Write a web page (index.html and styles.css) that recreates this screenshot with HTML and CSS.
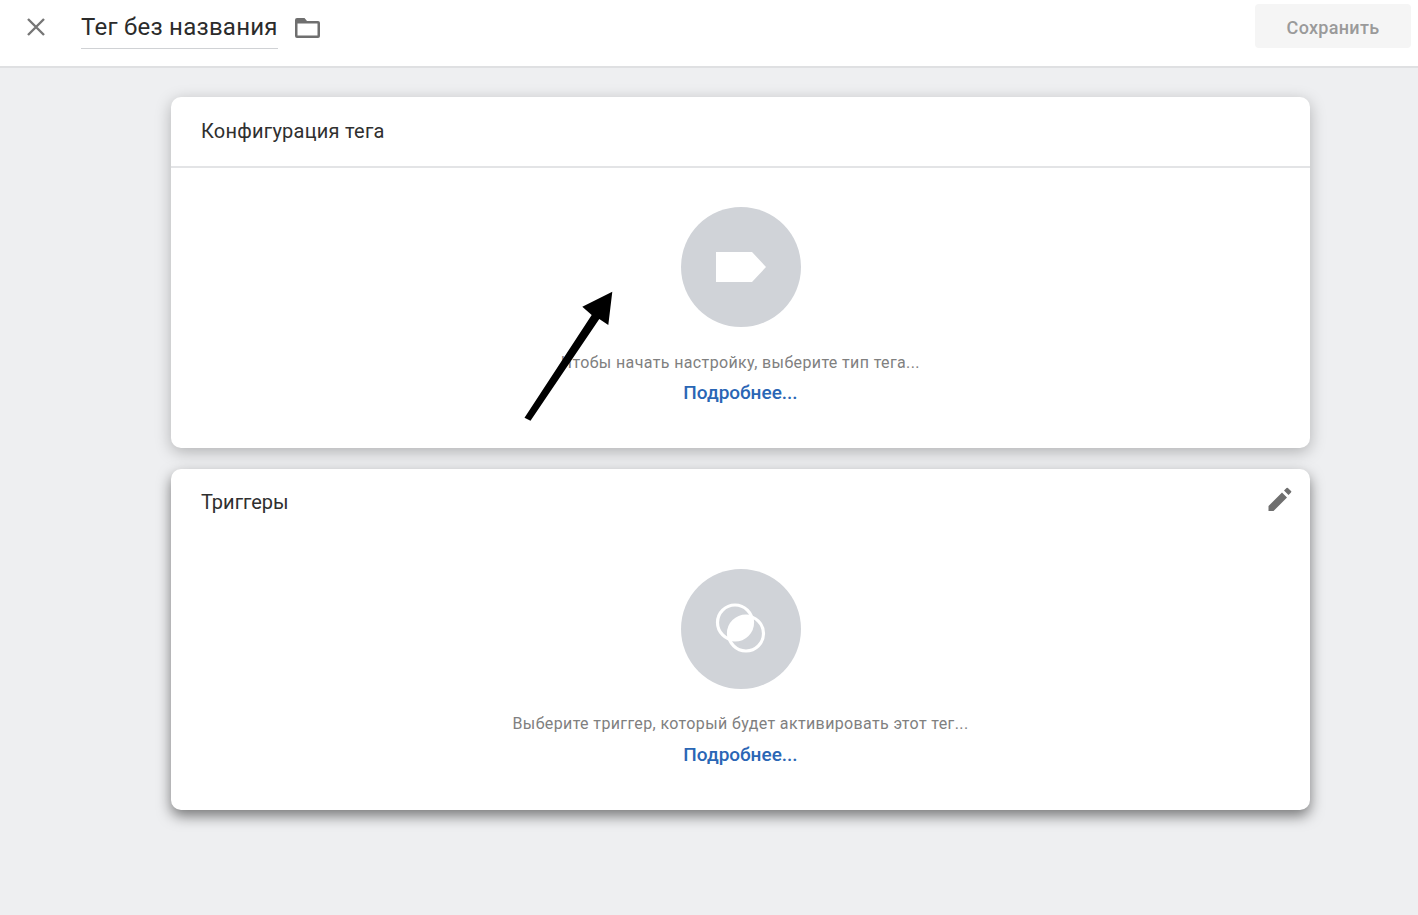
FILE: index.html
```html
<!DOCTYPE html>
<html lang="ru">
<head>
<meta charset="utf-8">
<title>Тег без названия</title>
<link rel="stylesheet" href="styles.css">
</head>
<body>
<header class="topbar">
  <button class="close" aria-label="Закрыть">
    <svg width="20" height="20" viewBox="0 0 20 20"><path d="M2 2L18 18M18 2L2 18" class="close-x"/></svg>
  </button>
  <div class="title">Тег без названия</div>
  <svg class="folder" width="25" height="20" viewBox="0 0 25 20"><path fill-rule="evenodd" d="M2 0H9.5L12 3H23a2 2 0 0 1 2 2V18a2 2 0 0 1-2 2H2a2 2 0 0 1-2-2V2a2 2 0 0 1 2-2zM2.5 5.5V17.5H22.5V5.5z" fill="#6f6f6f"/></svg>
  <div class="save">Сохранить</div>
</header>
<main class="content">
  <section class="card card-first">
    <div class="card-head card-head-line"><h2>Конфигурация тега</h2></div>
    <div class="card-body body-first">
      <div class="disc">
        <svg width="50" height="30" viewBox="0 0 50 30"><path d="M0 0H36L50 15L36 30H0z" fill="#fff"/></svg>
      </div>
      <p class="hint">Чтобы начать настройку, выберите тип тега...</p>
      <a class="more">Подробнее...</a>
    </div>
  </section>
  <section class="card card-second">
    <div class="card-head card-head-plain"><h2>Триггеры</h2>
      <svg class="pencil" width="24" height="24" viewBox="0 0 24 24"><path d="M0.5 24V19L14 5.5L19 10.5L5.5 24zM16 3.5L18.5 1a1 1 0 0 1 1.4 0L23 4.1a1 1 0 0 1 0 1.4L20.5 8z" fill="#6f6f6f"/></svg>
    </div>
    <div class="card-body body-second">
      <div class="disc">
        <svg width="52" height="52" viewBox="0 0 52 52">
          <path d="M36.6 13.9A17.5 17.5 0 0 0 14.4 36.1A17.5 17.5 0 0 0 36.6 13.9z" fill="#fff"/>
          <circle cx="20" cy="19.5" r="17.5" class="ring"/>
          <circle cx="31" cy="30.5" r="17.5" class="ring"/>
        </svg>
      </div>
      <p class="hint">Выберите триггер, который будет активировать этот тег...</p>
      <a class="more">Подробнее...</a>
    </div>
  </section>
</main>
<svg class="arrow" width="100" height="140" viewBox="0 0 100 140"><path d="M0.5 127.7L67.7 25L58.3 16.7L88.3 1.7L84.3 35L75.3 29L6.5 130.7z" fill="#000"/></svg>
</body>
</html>
```
FILE: styles.css
```css
* { box-sizing: border-box; }
html, body { margin: 0; height: 915px; overflow: hidden; }
body { background: #eeeff1; font-family: Roboto, "Liberation Sans", sans-serif; position: relative; }
.topbar { height: 68px; background: #fff; border-bottom: 2px solid #dfe0e2; display: flex; align-items: flex-start; padding-right: 7px; }
.close { width: 20px; height: 20px; margin: 17px 0 0 26px; padding: 0; border: 0; background: none; display: block; }
.close-x { stroke: #767676; stroke-width: 2.4; fill: none; }
.title { margin: 12px 0 0 35px; width: 197px; height: 37px; font-size: 24px; line-height: 31px; letter-spacing: .25px; color: #2b2b2b; border-bottom: 1px solid #d0d2d5; white-space: nowrap; }
.folder { margin: 18px 0 0 17px; }
.save { margin: 4px 0 0 auto; width: 156px; height: 44px; border-radius: 4px; background: #f5f5f5; color: #9a9a9a; font-size: 18px; font-weight: 500; letter-spacing: .3px; text-align: center; line-height: 47px; }
.content { width: 1139px; margin: 29px 0 0 171px; display: flex; flex-direction: column; gap: 21px; }
.card { background: #fff; border-radius: 10px; }
.card-first { height: 351px; box-shadow: 0 4px 16px rgba(0,0,0,.26); }
.card-second { height: 341px; box-shadow: 0 6px 14px rgba(0,0,0,.5); }
.card-head { display: flex; justify-content: space-between; padding: 21px 18px 0 30px; }
.card-head-line { border-bottom: 2px solid #e3e4e6; height: 71px; }
.card-head-plain { height: 69px; padding-top: 20px; }
.card-head h2 { margin: 0; font-size: 20px; line-height: 26px; font-weight: 400; color: #2f2f2f; }
.card-head-line h2 { letter-spacing: .24px; }
.pencil { margin-top: -2px; }
.card-body { display: flex; flex-direction: column; align-items: center; }
.body-first { padding-top: 39px; }
.body-second { padding-top: 31px; }
.disc { width: 120px; height: 120px; border-radius: 50%; background: #d0d3d8; display: flex; align-items: center; justify-content: center; }
.hint { margin: 24px 0 0; font-size: 16px; line-height: 22px; color: #808080; letter-spacing: .37px; white-space: nowrap; }
.body-first .hint { margin-top: 25px; }
.more { margin-top: 8px; font-size: 19px; line-height: 24px; font-weight: 500; color: #2a66b5; }
.body-first .more { margin-top: 7px; }
.ring { fill: none; stroke: #fff; stroke-width: 3.2; }
.arrow { position: absolute; left: 524px; top: 290px; }
```
